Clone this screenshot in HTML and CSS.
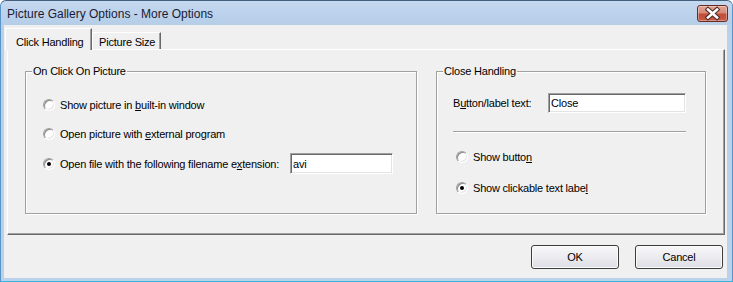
FILE: index.html
```html
<!DOCTYPE html>
<html>
<head>
<meta charset="utf-8">
<link rel="stylesheet" href="styles.css">
</head>
<body>
<div class="window">
  <div class="titlebar">
    <span class="title">Picture Gallery Options - More Options</span>
    <div class="close">
      <svg width="31" height="17" viewBox="0 0 31 17">
        <path d="M11 4.5 L20 12.5 M20 4.5 L11 12.5" stroke="#4b2a26" stroke-width="4.6" stroke-linecap="square" fill="none"/>
        <path d="M11 4.5 L20 12.5 M20 4.5 L11 12.5" stroke="#ffffff" stroke-width="2.6" stroke-linecap="square" fill="none"/>
      </svg>
    </div>
  </div>
  <div class="client">
    <div class="tabs">
      <div class="tab tab-click selected">Click Handling</div>
      <div class="tab tab-size">Picture Size</div>
    </div>
    <div class="panel">
      <div class="group group-click">
        <span class="legend">On Click On Picture</span>
        <div class="row"><span class="radio"></span><span>Show picture in <u>b</u>uilt-in window</span></div>
        <div class="row"><span class="radio"></span><span>Open picture with <u>e</u>xternal program</span></div>
        <div class="row row-ext"><span class="radio checked"></span><span class="ext-label">Open file with the following filename e<u>x</u>tension:</span><input class="field field-ext" value="avi"></div>
      </div>
      <div class="group group-close">
        <span class="legend">Close Handling</span>
        <div class="row row-label"><span class="btn-label">B<u>u</u>tton/label text:</span><input class="field field-close" value="Close"></div>
        <div class="separator"></div>
        <div class="row row-show"><span class="radio"></span><span>Show butto<u>n</u></span></div>
        <div class="row row-clickable"><span class="radio checked"></span><span>Show clickable text labe<u>l</u></span></div>
      </div>
    </div>
    <div class="buttons">
      <button class="btn">OK</button>
      <button class="btn">Cancel</button>
    </div>
  </div>
</div>
</body>
</html>
```

FILE: styles.css
```css
* { box-sizing: border-box; }
html, body { margin: 0; padding: 0; }
body {
  width: 733px;
  height: 282px;
  overflow: hidden;
  background: #ffffff;
  font-family: "Liberation Sans", Arial, sans-serif;
  font-size: 11px;
  color: #000;
}
.window {
  width: 733px;
  height: 282px;
  display: flex;
  flex-direction: column;
  border: 1px solid #44607f;
  border-left-color: #5a93c8;
  border-right-color: #5a93c8;
  border-bottom-color: #39b4df;
  border-radius: 6px 6px 0 0;
  background: linear-gradient(#c4d8ef 0, #b6cde8 24px, #b9d1ea 24px, #b9d1ea 100%);
  padding: 0 5px 3px 3px;
}
.titlebar {
  height: 24px;
  display: flex;
  justify-content: space-between;
  align-items: flex-start;
  padding-left: 3px;
}
.title {
  font-size: 12px;
  line-height: 14px;
  margin-top: 6px;
  color: #1b1b35;
}
.close {
  width: 31px;
  height: 17px;
  margin-top: 4px;
  margin-right: -1px;
  border: 1px solid #6b2a22;
  border-radius: 3px;
  background: linear-gradient(#e3a394 0%, #d68a78 45%, #c24d39 55%, #c65a44 100%);
  box-shadow: inset 0 0 0 1px rgba(255,255,255,0.35);
  display: flex;
}
.close svg { margin: -1px; }
.client {
  flex: 1;
  background: #f0f0f0;
  display: flex;
  flex-direction: column;
  padding: 0 1px 0 1px;
  letter-spacing: -0.2px;
}
.tabs {
  height: 24px;
  display: flex;
  align-items: flex-end;
}
.tab {
  background: #f0f0f0;
  border-top: 1px solid #fff;
  border-left: 1px solid #fff;
  border-right: 1px solid #696969;
  box-shadow: inset -1px 0 0 #a0a0a0;
  line-height: 14px;
  white-space: nowrap;
}
.tab-click {
  width: 87px;
  height: 22px;
  margin-bottom: -1px;
  padding: 6px 0 0 10px;
  position: relative;
  z-index: 1;
}
.tab-size {
  width: 69px;
  height: 17px;
  padding: 2px 0 0 6px;
}
.panel {
  height: 186px;
  margin: 0 1px 0 2px;
  border: 1px solid;
  border-color: #fff #696969 #696969 #fff;
  box-shadow: inset -1px -1px 0 #a0a0a0;
  display: flex;
  align-items: flex-start;
  gap: 19px;
  padding: 21px 0 0 17px;
}
.group {
  position: relative;
  height: 143px;
  border: 1px solid #a0a0a0;
  box-shadow: inset 1px 1px 0 #fff, 1px 1px 0 #fff;
  display: flex;
  flex-direction: column;
}
.group-click { width: 392px; padding: 23px 0 0 17px; }
.group-close { width: 270px; padding: 20px 0 0 16px; }
.legend {
  position: absolute;
  top: -8px;
  left: 6px;
  padding: 0 1px;
  line-height: 14px;
  background: #f0f0f0;
  white-space: nowrap;
}
.row {
  height: 20px;
  display: flex;
  align-items: center;
  gap: 5px;
  white-space: nowrap;
}
.group-click .row + .row { margin-top: 9px; }
.group-click .row-ext { margin-top: 8px; height: 21px; }
u { text-underline-offset: 1px; }
.radio {
  width: 12px;
  height: 12px;
  flex: 0 0 12px;
  border-radius: 50%;
  border: 1px solid;
  border-color: #a0a0a0 #ffffff #ffffff #a0a0a0;
  box-shadow: inset 1px 1px 0 #8a8a8a, inset -1px -1px 0 #e3e3e3;
  background: #fff;
  display: flex;
  align-items: center;
  justify-content: center;
}
.radio.checked::after {
  content: "";
  width: 4px;
  height: 4px;
  border-radius: 50%;
  background: #000;
}
.ext-label { width: 225px; }
.field {
  height: 21px;
  border: 1px solid;
  border-color: #a0a0a0 #fff #fff #a0a0a0;
  box-shadow: inset 1px 1px 0 #696969, inset -1px -1px 0 #e3e3e3;
  background: #fff;
  padding: 0 2px;
  margin: 0;
  font: inherit;
  font-size: 11px;
  letter-spacing: -0.2px;
  color: #000;
  outline: none;
}
.field-ext { width: 103px; }
.row-label { height: 21px; gap: 0; }
.btn-label { width: 95px; }
.field-close { width: 138px; height: 20px; }
.separator {
  width: 233px;
  height: 2px;
  margin-top: 18px;
  border-top: 1px solid #a0a0a0;
  border-bottom: 1px solid #fff;
}
.row-show { margin-top: 14px; padding-left: 3px; }
.row-clickable { margin-top: 11px; padding-left: 3px; }
.buttons {
  margin-top: 10px;
  height: 24px;
  display: flex;
  justify-content: flex-end;
  gap: 16px;
  padding-right: 3px;
}
.btn {
  width: 88px;
  height: 24px;
  border: 1px solid #3c3c3c;
  border-radius: 3px;
  background: linear-gradient(#f7f7f9 0%, #ececf0 50%, #dcdce6 100%);
  box-shadow: inset 0 0 0 1px #fbfbfb;
  font: inherit;
  font-size: 11px;
  letter-spacing: -0.2px;
  color: #000;
  padding: 0;
}
```
